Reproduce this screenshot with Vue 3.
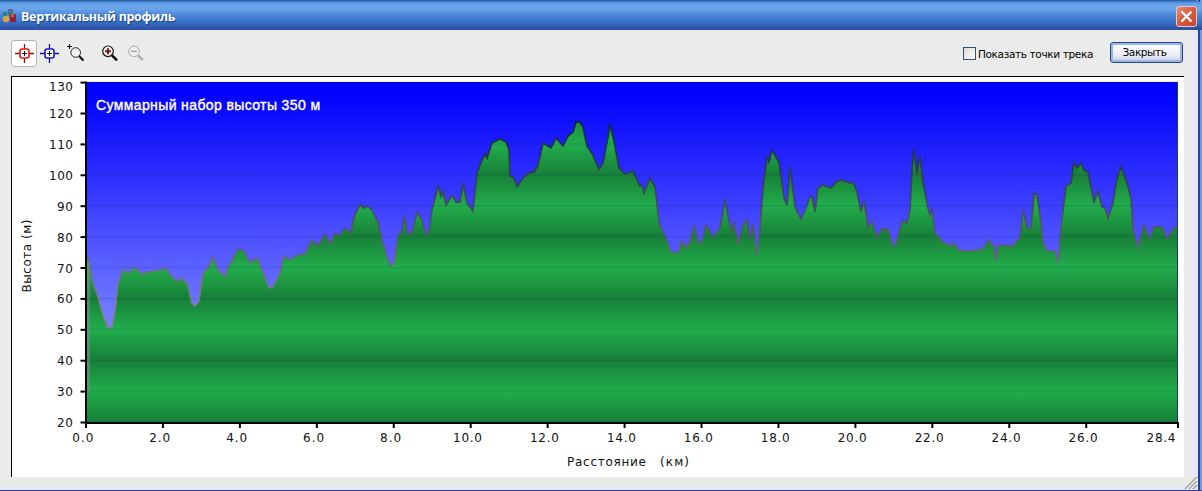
<script setup>
import { ref, computed } from 'vue';

const PLOT = { left: 87, right: 1178, top: 82, bottom: 422 };

const title = 'Вертикальный профиль';
const showPoints = ref(false);
const activeTool = ref('start');

// Screen position of every elevation sample, x then y
const profile = [
  87,255, 89,262, 93,284, 97,293, 103,315, 108,328, 112,327, 115,311, 118,284, 123,270, 129,273, 134,267, 142,274,
  147,272, 160,270, 166,268, 171,276, 177,281, 181,278, 187,283, 192,303, 195,306, 199,301, 203,273, 208,268, 213,257,
  218,270, 225,277, 228,267, 233,259, 238,249, 244,251, 250,263, 257,258, 265,277, 269,288, 273,287, 280,273,
  284,256, 290,260, 297,255, 305,254, 312,240, 318,246, 325,234, 330,244, 335,233, 339,236, 345,228, 351,233,
  354,217, 360,204, 363,208, 367,206, 372,210, 378,222, 382,240, 388,260, 391,266, 394,263, 398,235, 402,232, 404,216,
  408,235, 412,232, 417,212, 422,220, 426,235, 429,231, 432,210, 435,198, 438,185, 441,196, 443,191, 446,205,
  452,195, 456,202, 460,202, 463,183, 467,203, 470,207, 473,211, 477,173, 482,160, 485,154, 487,158, 492,143, 500,139,
  506,142, 509,150, 510,176, 514,178, 517,187, 523,178, 530,172, 534,172, 538,165, 543,143, 551,148, 556,138,
  563,146, 568,136, 573,132, 576,122, 580,122, 583,127, 587,146, 593,155, 596,163, 599,169, 603,163, 608,137, 610,124,
  614,141, 619,168, 625,174, 633,171, 640,186, 642,185, 644,193, 650,178, 655,187, 657,203, 659,223, 665,236,
  671,252, 678,253, 682,241, 686,248, 690,242, 694,225, 698,242, 702,242, 706,225, 713,237, 720,228, 723,212,
  725,199, 728,217, 732,232, 734,222, 738,244, 743,225, 747,220, 750,240, 753,225, 757,255, 760,228, 763,187,
  767,157, 769,162, 772,150, 776,157, 779,162, 784,198, 787,205, 790,166, 795,207, 801,219, 806,208, 810,197, 812,197,
  815,212, 818,188, 823,185, 831,188, 837,181, 842,180, 850,183, 853,182, 857,192, 861,212, 864,201, 868,227, 872,222,
  877,237, 882,229, 888,229, 893,247, 896,244, 900,228, 903,220, 907,223, 910,210, 912,170, 914,149, 917,174,
  920,156, 923,183, 928,208, 930,215, 932,210, 935,233, 943,242, 952,246, 954,243, 958,250, 970,251, 983,249,
  989,240, 992,245, 994,246, 996,262, 998,245, 1013,246, 1020,237, 1023,209, 1027,228, 1031,228, 1034,194, 1037,194,
  1041,222, 1043,243, 1047,251, 1055,251, 1058,263, 1061,227, 1066,186, 1071,183, 1074,162, 1077,168, 1081,163,
  1084,170, 1088,172, 1094,202, 1098,191, 1102,207, 1105,208, 1108,218, 1113,203, 1117,178, 1121,167, 1127,183,
  1131,198, 1133,230, 1138,247, 1144,225, 1150,239, 1154,227, 1162,227, 1167,239, 1173,229, 1178,227,
];

const linePoints = computed(() => profile.join(' '));
const areaPoints = computed(
  () => `${linePoints.value} ${PLOT.right},${PLOT.bottom} ${PLOT.left},${PLOT.bottom}`
);

const yTicks = [];
for (let v = 20; v <= 130; v += 10) {
  const y = PLOT.bottom - (v - 20) * 3.09;
  yTicks.push({ label: v, y, textY: v === 130 ? 91 : y + 5 });
}

const xTicks = [];
for (let km = 0; km <= 26; km += 2) {
  xTicks.push({ label: km.toFixed(1), x: 86 + km * 38.47, width: km < 10 ? 21 : 29 });
}
xTicks.push({ label: '28.4', x: PLOT.right, textX: 1161, width: 29 });

// Alternating dark and light bands every 10 m
const bands = yTicks.map((tick, i) => ({
  offset: 1 - i / 11,
  color: i % 2 === 0 ? '#178038' : '#22ad4b',
}));
bands.reverse();
</script>

<template>
  <div class="window">
    <header class="titlebar">
      <svg class="app-icon" width="16" height="16" viewBox="0 0 16 16">
        <rect x="1" y="3" width="4" height="8" fill="#2c7c7d" />
        <rect x="6" y="0" width="5" height="7" fill="#49718a" />
        <circle cx="4" cy="10" r="3.2" fill="#e0a53c" />
        <rect x="8" y="5" width="6" height="8" rx="1" fill="#8c2437" />
        <rect x="9" y="5" width="3" height="3" fill="#d4574f" />
      </svg>
      <h1 class="title">{{ title }}</h1>
      <button class="close">
        <svg width="19" height="19" viewBox="0 0 19 19">
          <path d="M4.5 4.5l10 10M14.5 4.5l-10 10" stroke="#fff" stroke-width="2.4" />
        </svg>
      </button>
    </header>

    <div class="body">
      <div class="toolbar">
        <button class="tool tool--target" :class="{ 'tool--active': activeTool === 'start' }" @click="activeTool = 'start'">
          <svg width="19" height="19" viewBox="0 0 19 19">
            <path d="M9.5 0v5M9.5 14v5M0 9.5h5M14 9.5h5" stroke="#801010" stroke-width="1.3" />
            <rect x="5" y="5" width="9" height="9" rx="2" fill="#fff" stroke="#e01818" stroke-width="1.6" />
            <path d="M9.5 7v5M7 9.5h5" stroke="#111" />
          </svg>
        </button>
        <button class="tool" :class="{ 'tool--active': activeTool === 'finish' }" @click="activeTool = 'finish'">
          <svg width="19" height="19" viewBox="0 0 19 19">
            <path d="M9.5 0v5M9.5 14v5M0 9.5h5M14 9.5h5" stroke="#101080" stroke-width="1.3" />
            <rect x="5" y="5" width="9" height="9" rx="2" fill="#fff" stroke="#1818d8" stroke-width="1.6" />
            <path d="M9.5 7v5M7 9.5h5" stroke="#111" />
          </svg>
        </button>
        <button class="tool">
          <svg width="21" height="19" viewBox="0 0 21 19">
            <path d="M5.5 0v5M3 2.5h5" stroke="#111" />
            <circle cx="11.7" cy="8.5" r="4.8" fill="#f4f4f4" stroke="#222" />
            <path d="M15 12l4.5 4.5" stroke="#111" stroke-width="2.2" />
          </svg>
        </button>
        <button class="tool tool--zoom-in">
          <svg width="19" height="19" viewBox="0 0 19 19">
            <circle cx="8" cy="7.3" r="5.3" fill="#fbf3f3" stroke="#111" stroke-width="1.2" />
            <path d="M8 4.3v6M5 7.3h6" stroke="#801515" stroke-width="2" />
            <path d="M12 11.3l5 5" stroke="#111" stroke-width="2.6" />
          </svg>
        </button>
        <button class="tool" disabled>
          <svg width="19" height="19" viewBox="0 0 19 19">
            <circle cx="9" cy="7.3" r="5.3" fill="#efefef" stroke="#aaa" />
            <path d="M6 7.3h6" stroke="#aaa" stroke-width="1.6" />
            <path d="M13 11.3l4.7 4.7" stroke="#aaa" stroke-width="2.4" />
          </svg>
        </button>
        <label class="points">
          <input v-model="showPoints" class="checkbox" type="checkbox">
          <span>Показать точки трека</span>
        </label>
        <button class="btn">Закрыть</button>
      </div>

      <div class="chart">
        <svg width="1172" height="400" viewBox="12 77 1172 400">
          <defs>
            <linearGradient id="sky" gradientUnits="userSpaceOnUse" x1="0" y1="82" x2="0" y2="330">
              <stop offset="0" stop-color="#0000ff" />
              <stop offset="0.07" stop-color="#0404ff" />
              <stop offset="0.65" stop-color="#5054ff" />
              <stop offset="1" stop-color="#7884ff" />
            </linearGradient>
            <linearGradient id="ground" gradientUnits="userSpaceOnUse" x1="0" y1="82" x2="0" y2="422">
              <stop v-for="band in bands" :key="band.offset" :offset="band.offset" :stop-color="band.color" />
            </linearGradient>
            <linearGradient id="ridge" gradientUnits="userSpaceOnUse" x1="0" y1="120" x2="0" y2="300">
              <stop offset="0" stop-color="#0c2430" />
              <stop offset="0.5" stop-color="#454a58" />
              <stop offset="1" stop-color="#857c90" />
            </linearGradient>
          </defs>

          <rect x="87" y="82" width="1091" height="340" fill="url(#sky)" />
          <polygon :points="areaPoints" fill="url(#ground)" />
          <polyline class="ridge" :points="linePoints" />
          <g class="grid">
            <line v-for="tick in yTicks" :key="tick.label" x1="87" x2="1178" :y1="tick.y" :y2="tick.y" />
          </g>
          <rect x="87" y="262" width="3" height="130" fill="#6d8f8a" opacity="0.6" />
          <rect x="1177" y="82" width="1" height="341" fill="#173f50" />

          <g class="axis">
            <path d="M86 81.5V423.5M85 423H1179" />
            <path v-for="tick in yTicks" :key="tick.label" :d="`M80.5 ${tick.y + 0.5}H86`" />
            <path v-for="tick in xTicks" :key="tick.label" :d="`M${tick.x} 423V428`" />
          </g>

          <g class="labels labels--y">
            <text
              v-for="tick in yTicks"
              :key="tick.label"
              x="73"
              :y="tick.textY"
              :textLength="tick.label < 100 ? 16 : 24"
            >{{ tick.label }}</text>
          </g>
          <g class="labels labels--x">
            <text
              v-for="tick in xTicks"
              :key="tick.label"
              :x="tick.textX || tick.x - 3.2"
              y="442"
              :textLength="tick.width"
            >{{ tick.label }}</text>
            <text x="606.5" y="466" textLength="79">Расстояние</text>
            <text x="674.5" y="466" textLength="29">(км)</text>
            <text transform="translate(31 256) rotate(-90)" textLength="73">Высота (м)</text>
          </g>
          <text class="summary" x="96" y="109.5" textLength="224">Суммарный набор высоты 350 м</text>
        </svg>
      </div>
    </div>
    <svg class="grip" width="14" height="14" viewBox="0 0 14 14">
      <path d="M1 13L13 1M5 13l8-8M9 13l4-4" stroke="#a5a9a0" stroke-width="1.6" />
      <path d="M3 13L13 3M7 13l6-6" stroke="#fff" />
    </svg>
  </div>
</template>

<style>
  body {
    background-color: #4c79cf;
    overflow: hidden;
  }
</style>

<style scoped>
  .window {
    position: relative;
    box-sizing: border-box;
    width: 1202px;
    height: 491px;
    overflow: hidden;
    font-family: "DejaVu Sans", Verdana, sans-serif;
    background: linear-gradient(to right, #e6e6fa 0 1198px, #283f8c 1198px 1200px, #6f9ae8 1200px);
    border-bottom: 1px solid #3f3a98;
  }

  .titlebar {
    box-sizing: border-box;
    height: 30px;
    padding: 3px 5px 0 2px;
    display: flex;
    align-items: center;
    border-radius: 0 7px 0 0;
    background: linear-gradient(#204a8c 0, #3a78c8 1px, #66a4ea 4px, #69a5ea 9px, #4b87d8 15px, #3b74cb 21px, #3058ae 27px, #2c4fa3 30px);
  }

  .title {
    margin: 0 auto 0 3px;
    color: white;
    font: bold 12.5px "Open Sans", sans-serif;
    letter-spacing: -0.32px;
    text-shadow: 1px 1px 1px #1c3f86;
    white-space: nowrap;
  }

  .close {
    width: 21px;
    height: 21px;
    padding: 0;
    display: flex;
    align-items: center;
    justify-content: center;
    border: 1px solid #e9c9cf;
    border-radius: 3px;
    background: linear-gradient(135deg, #e58e78, #d65a3c 50%, #c8452b);
  }

  .body {
    box-sizing: border-box;
    width: 1193px;
    height: 456px;
    padding: 9px 10px 0 11px;
    background-color: #ebebeb;
    border-bottom: 8px solid #e6ece3;
  }

  .toolbar {
    height: 37px;
    display: flex;
    align-items: flex-start;
  }

  .tool {
    box-sizing: border-box;
    width: 25px;
    height: 27px;
    margin-top: 1px;
    padding: 0;
    display: flex;
    align-items: center;
    justify-content: center;
    border: 1px solid transparent;
    border-radius: 3px;
    background: none;
  }

  .tool--target {
    width: 26px;
  }

  .tool--active {
    background-color: white;
    border-color: #b4b4b4;
  }

  .tool--zoom-in {
    margin-left: 10px;
  }

  .points {
    margin: 8px 17px 0 auto;
    display: flex;
    align-items: center;
    gap: 2px;
    font-size: 10.5px;
    letter-spacing: -0.35px;
    white-space: nowrap;
  }

  .checkbox {
    appearance: none;
    box-sizing: border-box;
    width: 13px;
    height: 13px;
    margin: 0;
    border: 1px solid #35506e;
    background: linear-gradient(135deg, #dcdcdc, #fff);
  }

  .btn {
    box-sizing: border-box;
    width: 73px;
    height: 21px;
    margin: 3px 0 0;
    padding: 0 4px 1px 0;
    font: 10.5px "DejaVu Sans", Verdana, sans-serif;
    letter-spacing: -0.4px;
    border: 1px solid #24478c;
    border-radius: 3px;
    background: linear-gradient(#fff, #eef0f8 60%, #c5cee8);
    box-shadow: inset 0 0 0 2px #9db5e4;
  }

  .chart {
    width: 1172px;
    height: 400px;
    border-top: 1px solid black;
    border-left: 1px solid black;
    background-color: white;
  }

  .chart svg {
    display: block;
  }

  .ridge {
    fill: none;
    stroke: url(#ridge);
    stroke-width: 1.8;
    opacity: 0.85;
  }

  .grid {
    stroke: #003060;
    stroke-width: 1.5;
    opacity: 0.13;
  }

  .axis {
    fill: none;
    stroke: black;
    stroke-width: 2;
  }

  .labels {
    font-size: 12px;
    fill: #111;
  }

  .labels--y {
    text-anchor: end;
  }

  .labels--x {
    text-anchor: middle;
  }

  .summary {
    font: 14px "Liberation Sans", Arial, sans-serif;
    fill: white;
    stroke: white;
    stroke-width: 0.4;
  }

  .grip {
    position: absolute;
    right: 4px;
    bottom: 0;
  }
</style>
